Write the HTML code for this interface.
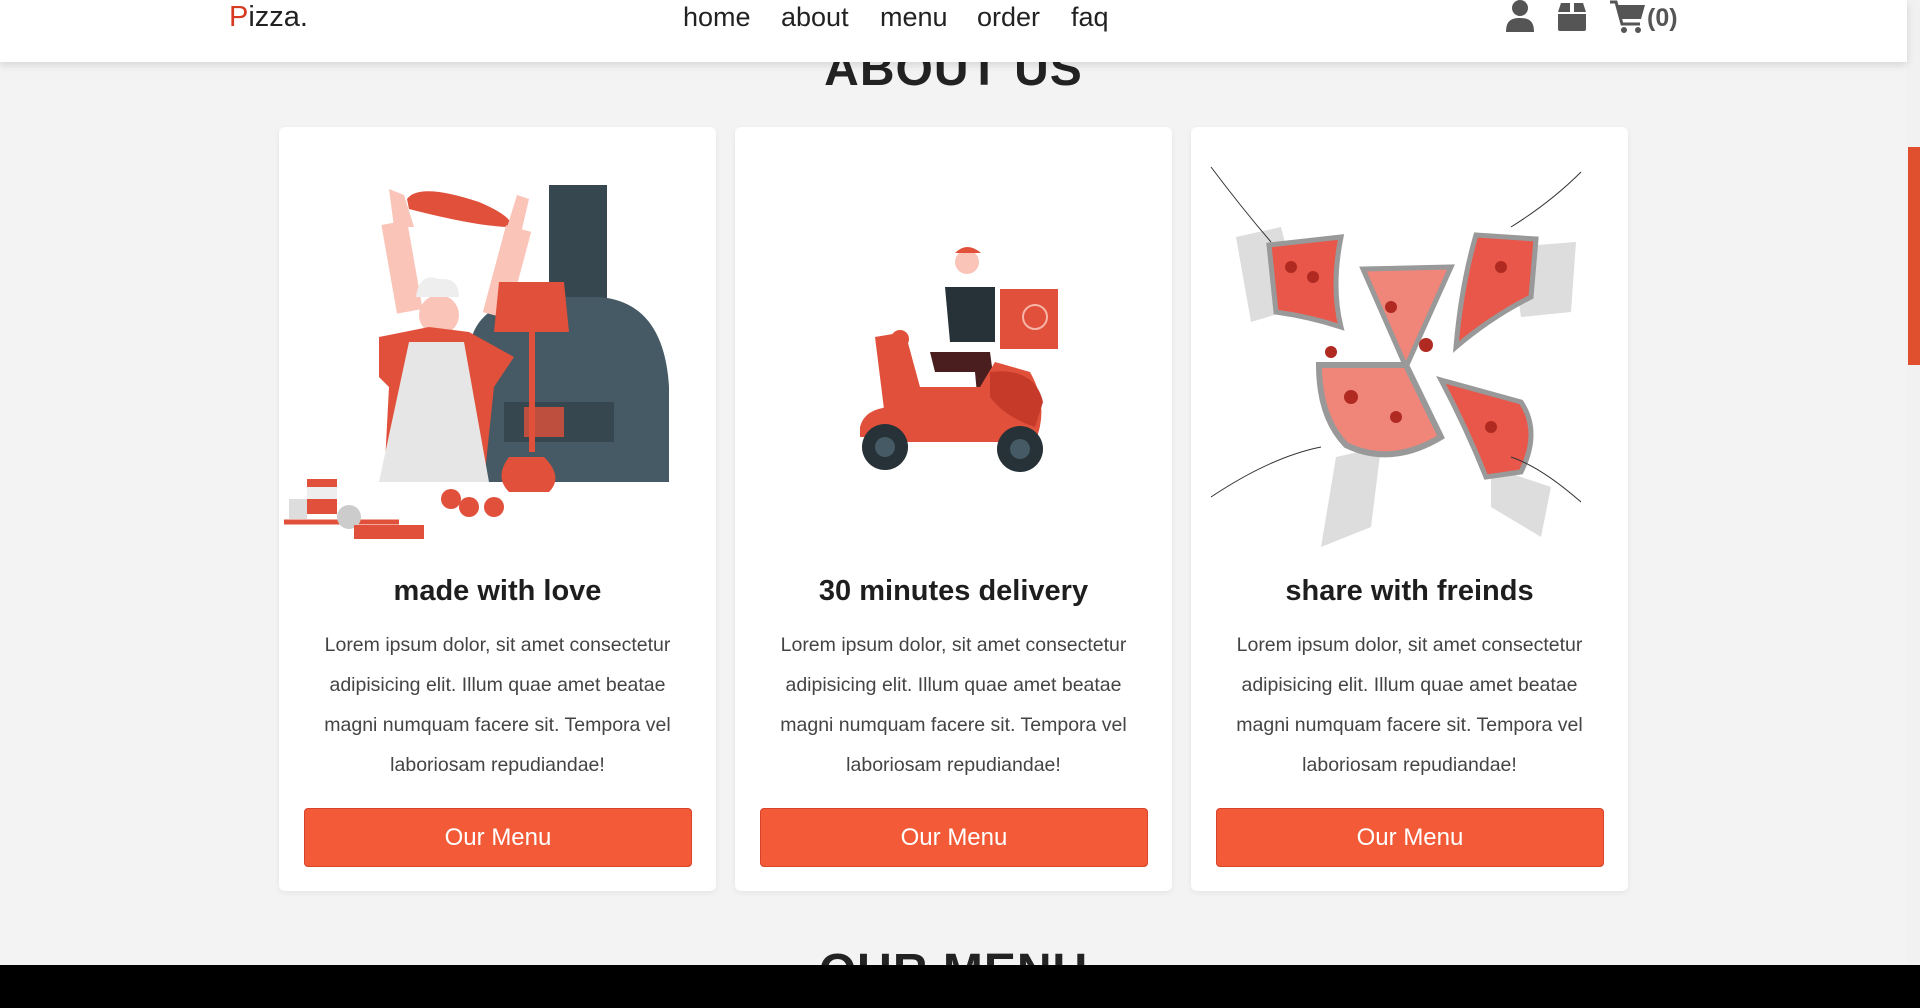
<!DOCTYPE html>
<html><head><meta charset="utf-8"><style>
*{margin:0;padding:0;box-sizing:border-box}
body{width:1920px;height:1008px;overflow:hidden;background:#f3f3f3;font-family:"Liberation Sans",sans-serif;position:relative}
.hdr{position:absolute;left:0;top:0;width:1907px;height:62px;background:#fff;box-shadow:0 3px 8px rgba(0,0,0,.12);z-index:5}
.logo{position:absolute;left:229px;top:0;font-size:29px;color:#222;line-height:34px}
.logo span{color:#d63b22}
.nav a{position:absolute;top:0;font-size:27px;color:#222;line-height:34px;text-decoration:none}
.ic{position:absolute;top:0}
.cnt{position:absolute;left:1647px;top:4px;font-size:25px;font-weight:bold;color:#555}
h1{position:absolute;left:0;width:1907px;text-align:center;top:42px;font-size:48px;font-weight:bold;color:#222;letter-spacing:1px}
h1.b{top:944px}
.card{position:absolute;top:127px;width:437px;height:764px;background:#fff;border-radius:6px;box-shadow:0 2px 6px rgba(0,0,0,.06)}
.card svg{position:absolute;left:0;top:0}
.card h3{position:absolute;top:448px;width:100%;text-align:center;font-size:29px;font-weight:bold;color:#1e1e1e}
.card p{position:absolute;top:498px;left:24px;right:24px;text-align:center;font-size:19.5px;line-height:40px;color:#444}
.btn{position:absolute;left:25px;top:681px;width:388px;height:59px;background:#f25a38;border:1px solid #d8442a;border-radius:4px;color:#fff;font-size:24px;text-align:center;line-height:57px}
.bar{position:absolute;left:0;top:965px;width:1920px;height:43px;background:#000;z-index:6}
.sb{position:absolute;left:1907px;top:0;width:13px;height:965px;background:#f1f1f1}
.th{position:absolute;left:1908px;top:147px;width:12px;height:218px;background:#e0502f}
</style></head><body>
<div class="hdr">
<div class="logo"><span>P</span>izza.</div>
<div class="nav"><a style="left:683px">home</a><a style="left:781px">about</a><a style="left:880px">menu</a><a style="left:977px">order</a><a style="left:1071px">faq</a></div>
<svg class="ic" style="left:1506px" width="28" height="33" viewBox="0 0 28 33"><circle cx="14" cy="8" r="8" fill="#555"/><path d="M0 32 C0 20 6 18 14 18 C22 18 28 20 28 32Z" fill="#555"/></svg>
<svg class="ic" style="left:1558px;top:3px" width="28" height="28" viewBox="0 0 28 28"><path d="M3 0H12V9H0Z M16 0H25L28 9H16Z M0 11H28V26Q28 28 26 28H2Q0 28 0 26Z" fill="#555"/></svg>
<svg class="ic" style="left:1610px" width="36" height="34" viewBox="0 0 36 34"><path d="M0 2H6L12 24H30" stroke="#555" stroke-width="3" fill="none"/><path d="M7 5H35L31 19H11Z" fill="#555"/><circle cx="14" cy="30" r="3" fill="#555"/><circle cx="28" cy="30" r="3" fill="#555"/></svg>
<div class="cnt">(0)</div>
</div>
<h1>ABOUT US</h1>
<h1 class="b">OUR MENU</h1>
<div class="card" style="left:279px">
<svg width="437" height="420" viewBox="0 0 437 420">
<rect x="270" y="58" width="58" height="130" fill="#37474f"/>
<path d="M190 355 V230 Q190 175 260 170 H320 Q385 175 390 260 V355Z" fill="#455a64"/>
<rect x="225" y="275" width="110" height="40" fill="#37474f"/>
<rect x="245" y="280" width="40" height="30" fill="#e0503a" opacity=".8"/>
<path d="M128 72 Q140 55 200 75 Q235 90 232 100 Q200 100 130 82Z" fill="#e0503a"/>
<path d="M115 100 L110 62 L125 68 L135 100Z" fill="#fbc4b8"/>
<path d="M225 110 L238 68 L250 72 L240 115Z" fill="#fbc4b8"/>
<rect x="110" y="95" width="26" height="90" fill="#fbc4b8" transform="rotate(-10 123 140)"/>
<rect x="215" y="100" width="26" height="90" fill="#fbc4b8" transform="rotate(15 228 145)"/>
<circle cx="160" cy="188" r="20" fill="#fbc4b8"/>
<path d="M137 170 Q140 145 160 152 Q180 150 180 170Z" fill="#eee"/>
<path d="M100 210 L150 200 L190 205 L235 230 L215 260 L205 355 H105 L110 260 L100 250Z" fill="#e0503a"/>
<path d="M130 215 H185 L210 355 H100Z" fill="#e6e6e6"/>
<path d="M220 155 H285 L290 205 H215Z" fill="#e0503a"/>
<rect x="250" y="205" width="6" height="120" fill="#e0503a"/>
<path d="M230 330 Q215 350 230 365 H270 Q285 350 265 330Z" fill="#e0503a"/>
<rect x="28" y="352" width="30" height="35" fill="#e0503a"/><rect x="28" y="360" width="30" height="12" fill="#eee"/>
<rect x="10" y="372" width="18" height="20" fill="#ddd"/>
<path d="M5 395 H120" stroke="#e0503a" stroke-width="5"/>
<circle cx="70" cy="390" r="12" fill="#ccc"/>
<rect x="75" y="398" width="70" height="14" fill="#e0503a"/>
<circle cx="172" cy="372" r="10" fill="#e0503a"/><circle cx="190" cy="380" r="10" fill="#e0503a"/><circle cx="215" cy="380" r="10" fill="#e0503a"/>
</svg>
<h3>made with love</h3>
<p>Lorem ipsum dolor, sit amet consectetur adipisicing elit. Illum quae amet beatae magni numquam facere sit. Tempora vel laboriosam repudiandae!</p>
<div class="btn">Our Menu</div>
</div>
<div class="card" style="left:735px">
<svg width="437" height="420" viewBox="0 0 437 420">
<rect x="265" y="162" width="58" height="60" fill="#e0503a"/>
<circle cx="300" cy="190" r="12" fill="none" stroke="#f7b4a8" stroke-width="2"/>
<circle cx="232" cy="135" r="12" fill="#fbc4b8"/><path d="M220 126 Q232 114 246 126Z" fill="#e0503a"/>
<path d="M210 160 H260 V215 H215Z" fill="#263238"/>
<path d="M195 225 H255 L265 300 H245 L240 245 H200Z" fill="#4a1e1e"/>
<path d="M140 210 L170 205 L185 260 H245 L260 235 L295 245 Q315 280 300 315 H175 Q150 315 150 290Z" fill="#e0503a"/>
<path d="M255 245 Q300 240 308 275 L300 300 Q270 290 255 270Z" fill="#c63a2a"/>
<path d="M125 300 Q130 280 160 280 H200 L205 310 H125Z" fill="#e0503a"/>
<circle cx="150" cy="320" r="23" fill="#263238"/><circle cx="150" cy="320" r="10" fill="#455a64"/>
<circle cx="285" cy="322" r="23" fill="#263238"/><circle cx="285" cy="322" r="10" fill="#455a64"/>
<circle cx="165" cy="212" r="9" fill="#e0503a"/>
</svg>
<h3>30 minutes delivery</h3>
<p>Lorem ipsum dolor, sit amet consectetur adipisicing elit. Illum quae amet beatae magni numquam facere sit. Tempora vel laboriosam repudiandae!</p>
<div class="btn">Our Menu</div>
</div>
<div class="card" style="left:1191px">
<svg width="437" height="420" viewBox="0 0 437 420">
<g fill="#ddd"><path d="M45 110 L90 100 L110 180 L60 195Z"/><path d="M320 120 L385 115 L380 185 L330 190Z"/><path d="M145 330 L190 320 L180 400 L130 420Z"/><path d="M300 340 L360 360 L350 410 L300 380Z"/></g>
<path d="M78 118 L150 110 Q140 160 150 200 Q120 190 85 185Z" fill="#e8574a" stroke="#999" stroke-width="5"/>
<path d="M172 142 L260 140 L215 240Z" fill="#f0857a" stroke="#999" stroke-width="5"/>
<path d="M285 108 L345 112 L340 170 Q300 190 265 220 Q270 160 285 108Z" fill="#e8574a" stroke="#999" stroke-width="5"/>
<path d="M128 238 L215 238 L250 310 Q200 340 155 318 Q128 290 128 238Z" fill="#f0857a" stroke="#999" stroke-width="6"/>
<path d="M250 253 L330 275 Q350 305 330 345 L295 350 Q275 300 250 253Z" fill="#e8574a" stroke="#999" stroke-width="5"/>
<g fill="#b02a22"><circle cx="100" cy="140" r="6"/><circle cx="122" cy="150" r="6"/><circle cx="200" cy="180" r="6"/><circle cx="310" cy="140" r="6"/><circle cx="160" cy="270" r="7"/><circle cx="205" cy="290" r="6"/><circle cx="300" cy="300" r="6"/><circle cx="235" cy="218" r="7"/><circle cx="140" cy="225" r="6"/></g>
<g stroke="#333" fill="none" stroke-width="1"><path d="M20 40 Q50 80 80 115"/><path d="M390 45 Q360 75 320 100"/><path d="M20 370 Q80 330 130 320"/><path d="M390 375 Q350 340 320 330"/></g>
</svg>
<h3>share with freinds</h3>
<p>Lorem ipsum dolor, sit amet consectetur adipisicing elit. Illum quae amet beatae magni numquam facere sit. Tempora vel laboriosam repudiandae!</p>
<div class="btn">Our Menu</div>
</div>
<div class="sb"></div><div class="th"></div>
<div class="bar"></div>
</body></html>
